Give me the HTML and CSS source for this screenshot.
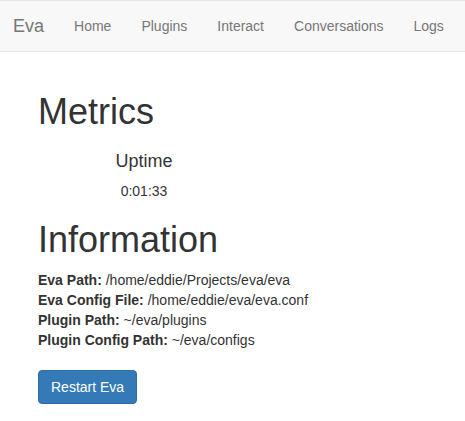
FILE: index.html
```html
<!DOCTYPE html>
<html>
<head>
<meta charset="utf-8">
<title>Eva</title>
<link rel="stylesheet" href="styles.css">
</head>
<body>
<nav class="navbar">
  <a class="brand" href="#">Eva</a>
  <ul class="nav">
    <li><a href="#">Home</a></li>
    <li><a href="#">Plugins</a></li>
    <li><a href="#">Interact</a></li>
    <li><a href="#">Conversations</a></li>
    <li><a href="#">Logs</a></li>
  </ul>
</nav>
<main class="container">
  <h1 class="title">Metrics</h1>
  <div class="metric">
    <h4 class="metric-name">Uptime</h4>
    <p class="metric-value">0:01:33</p>
  </div>
  <h1 class="title info-title">Information</h1>
  <p class="info">
    <strong>Eva Path:</strong> /home/eddie/Projects/eva/eva<br>
    <strong>Eva Config File:</strong> /home/eddie/eva/eva.conf<br>
    <strong>Plugin Path:</strong> ~/eva/plugins<br>
    <strong>Plugin Config Path:</strong> ~/eva/configs
  </p>
  <button class="btn" type="button">Restart Eva</button>
</main>
</body>
</html>
```

FILE: styles.css
```css
* { box-sizing: border-box; }
html, body { margin: 0; padding: 0; }
body {
  font-family: "Liberation Sans", Arial, sans-serif;
  font-size: 14px;
  line-height: 1.42857143;
  color: #333;
  background: #fff;
}
.navbar {
  display: flex;
  align-items: stretch;
  height: 52px;
  background: #f8f8f8;
  border-top: 1px solid #e7e7e7;
  border-bottom: 1px solid #e7e7e7;
}
.brand {
  display: block;
  padding: 15px 15px 15px 13px;
  font-size: 18px;
  line-height: 20px;
  color: #777;
  text-decoration: none;
}
.nav {
  display: flex;
  list-style: none;
  margin: 0;
  padding: 0;
}
.nav a {
  display: block;
  padding: 15px;
  line-height: 20px;
  color: #777;
  text-decoration: none;
  white-space: nowrap;
}
.container {
  padding: 20px 15px 0 38px;
}
.title {
  font-size: 36px;
  font-weight: 500;
  line-height: 1.1;
  margin: 20px 0 10px;
}
.metric {
  display: flow-root;
  width: 212px;
  text-align: center;
}
.metric-name {
  font-size: 18px;
  font-weight: 500;
  line-height: 1.1;
  margin: 10px 0;
}
.metric-value {
  margin: 0;
}
.info-title {
  margin-top: 19px;
}
.info {
  margin: 0 0 20px;
}
.btn {
  display: inline-block;
  font-family: inherit;
  font-size: 14px;
  line-height: 20px;
  padding: 6px 12px;
  color: #fff;
  background: #337ab7;
  border: 1px solid #2e6da4;
  border-radius: 4px;
  cursor: pointer;
}
```
